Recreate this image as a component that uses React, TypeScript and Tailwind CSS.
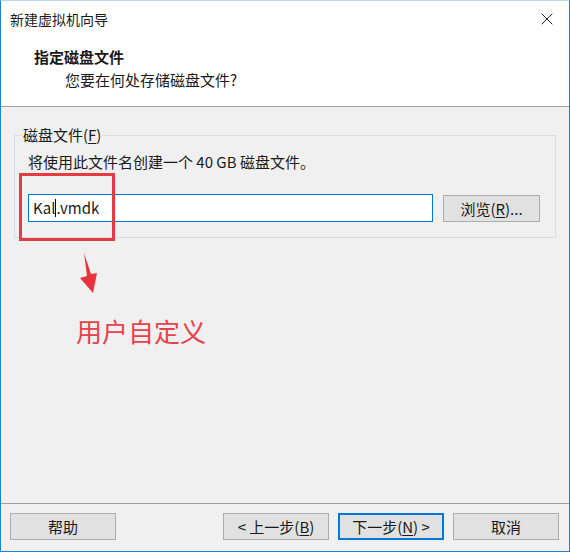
import { X } from "lucide-react";

const font = "font-['Noto_Sans_CJK_SC','Noto_Sans',sans-serif]";

function WinButton({
  children,
  focused = false,
}: {
  children: React.ReactNode;
  focused?: boolean;
}) {
  return (
    <button
      className={
        "h-[27px] w-[106px] bg-[#e1e1e1] text-[15px] leading-none text-[#1a1a1a] flex items-center justify-center " +
        (focused ? "border-2 border-[#0078d7]" : "border border-[#adadad]")
      }
    >
      {children}
    </button>
  );
}

export default function App() {
  return (
    <div
      className={`${font} relative w-[570px] h-[552px] flex flex-col bg-[#f0f0f0] border-x border-b border-[#1883d7] border-t border-t-[#b9d7f0] text-[#1a1a1a] overflow-hidden`}
    >
      {/* title bar */}
      <div className="h-[36px] bg-white flex items-center justify-between pl-[9px] pr-[12px]">
        <span className="text-[14px]">新建虚拟机向导</span>
        <X className="w-[20px] h-[20px] text-[#222]" strokeWidth={1.2} />
      </div>

      {/* header */}
      <div className="h-[70px] bg-white border-b border-[#a0a0a0] pl-[33px] pt-[9px]">
        <div className="text-[15px] font-bold leading-[22px]">指定磁盘文件</div>
        <div className="text-[15px] leading-[22px] pl-[31px] mt-[1px]">
          您要在何处存储磁盘文件?
        </div>
      </div>

      {/* body */}
      <div className="flex-1 px-[13px] pt-[28px]">
        <div className="relative border border-[#dcdcdc] h-[103px] px-[13px]">
          <div className="absolute -top-[11px] left-[7px] bg-[#f0f0f0] px-[1px] text-[15px] leading-[20px]">
            磁盘文件(<span className="underline underline-offset-2">F</span>)
          </div>
          <div className="pt-[16px] text-[15px] leading-[20px]">
            将使用此文件名创建一个 40 GB 磁盘文件。
          </div>
          <div className="flex items-center gap-[10px] mt-[22px]">
            <div className="h-[28px] w-[405px] bg-white border border-[#0078d7] flex items-center pl-[4px] text-[15px]">
              <span>Kal</span>
              <span className="inline-block w-px h-[18px] bg-black" />
              <span>.vmdk</span>
            </div>
            <button className="h-[27px] w-[97px] bg-[#e1e1e1] border border-[#adadad] text-[15px] leading-none flex items-center justify-center">
              浏览(<span className="underline underline-offset-2">R</span>)...
            </button>
          </div>
        </div>
        <div className="pl-[62px] pt-[78px] text-[26px] leading-[30px] text-[#e8414a]">
          用户自定义
        </div>
      </div>

      {/* footer */}
      <div className="h-[48px] border-t border-[#a0a0a0] flex items-center justify-between pl-[9px] pr-[10px] pb-[2px]">
        <WinButton>帮助</WinButton>
        <div className="flex gap-[9px]">
          <WinButton>
            &lt; 上一步(<span className="underline underline-offset-2">B</span>)
          </WinButton>
          <WinButton focused>
            下一步(<span className="underline underline-offset-2">N</span>) &gt;
          </WinButton>
          <WinButton>取消</WinButton>
        </div>
      </div>

      {/* annotation overlay */}
      <div className="absolute left-[18px] top-[172px] w-[96px] h-[68px] border-[3px] border-[#e63b43] pointer-events-none" />
      <svg
        className="absolute left-0 top-0 pointer-events-none"
        width="570"
        height="552"
        viewBox="0 0 570 552"
      >
        <polygon
          points="83,252 90,273 96,272 92,292 79,277 86,275"
          fill="#e8323c"
        />
      </svg>
    </div>
  );
}
